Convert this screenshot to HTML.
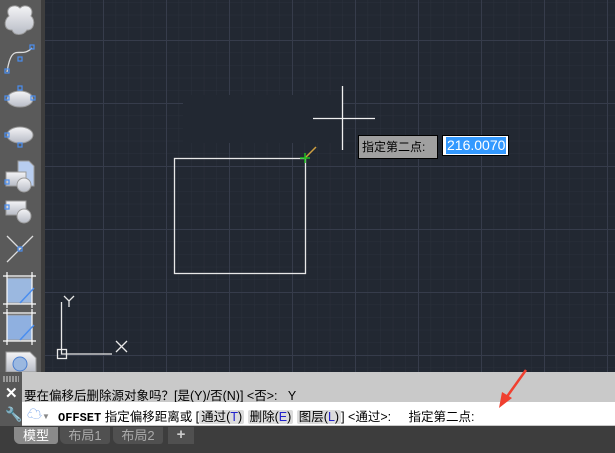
<!DOCTYPE html>
<html><head><meta charset="utf-8"><style>
body{margin:0;width:615px;height:453px;overflow:hidden;background:#3c3c3c;font-family:"Liberation Sans","Noto Sans CJK SC",sans-serif;position:relative}
.abs{position:absolute}
.k{background:#dcdcdc;padding:0 2px;border-radius:2px}
</style></head><body>
<svg class="abs" style="left:0;top:0" width="615" height="372">
<defs>
<pattern id="mn" x="103" y="40" width="12.6" height="12.6" patternUnits="userSpaceOnUse"><path d="M0 0V12.6M0 0H12.6" stroke="#2b313c" stroke-width="1" fill="none"/></pattern>
<pattern id="mj" x="103" y="40" width="63" height="63" patternUnits="userSpaceOnUse"><path d="M0.5 0V63M0 0.5H63" stroke="#363c4b" stroke-width="1" fill="none"/></pattern>
<linearGradient id="g" x1="0" y1="0" x2="0" y2="1"><stop offset="0" stop-color="#f4f4f6"/><stop offset="1" stop-color="#b8bcc6"/></linearGradient>
</defs>
<rect width="615" height="372" fill="#222832"/>
<rect x="45" width="570" height="372" fill="url(#mn)"/>
<rect x="45" width="570" height="372" fill="url(#mj)"/>
<rect x="183" y="95" width="160" height="48" fill="#222832"/>
<rect x="174.5" y="158.5" width="131" height="115" fill="none" stroke="#e8e8e8" stroke-width="1.3"/>
<path d="M305 158L316 147" stroke="#d0a040" stroke-width="1.5"/>
<path d="M300 158H310M305 153V163" stroke="#20c020" stroke-width="1.5"/>
<path d="M313 118.5H375M342.5 86V150" stroke="#f0f0f0" stroke-width="1.3"/>
<path d="M61.5 302V354H112M64 296L69 301L74 296M69 301V307M116 341L127 352M127 341L116 352" stroke="#e8e8e8" stroke-width="1.3" fill="none"/>
<rect x="57.5" y="349.5" width="9" height="9" fill="none" stroke="#e8e8e8" stroke-width="1.3"/>
<rect width="41" height="372" fill="#5a5a5a"/>
<rect x="41" width="4" height="372" fill="#3e3e3e"/>
<g fill="url(#g)" stroke="#999">
<path d="M9 16C4 7 15 3 20 8C25 3 35 7 31 16C36 20 34 31 27 30C23 36 14 36 12 30C4 31 3 20 9 16Z"/>
<ellipse cx="20" cy="99" rx="13" ry="8"/>
<ellipse cx="20" cy="135" rx="13" ry="8"/>
<path d="M18 161H29L34 166V186H18Z" fill="#b8cdef"/>
<rect x="6" y="172" width="20" height="14"/><circle cx="24" cy="185" r="7"/>
<rect x="6" y="201" width="20" height="14"/><circle cx="24" cy="216" r="7"/>
<rect x="7" y="278" width="25" height="25" fill="#9bb8e0"/>
<rect x="7" y="315" width="25" height="25" fill="#8fb0e0"/>
<path d="M6 352H30L36 358V372H6Z"/>
</g>
<g stroke="#fff" stroke-width="1.2"><path d="M3 276H36M3 304H36M7 272V308M32 272V308M3 313H36M3 341H36M7 309V345M32 309V345"/></g>
<path d="M20 303L34 288M20 340L34 325" stroke="#4a8ef0" stroke-width="1.5"/>
<path d="M7 72C12 40 20 60 32 48" stroke="#ddd" fill="none" stroke-width="1.3"/>
<path d="M7 262L33 236M7 236L20 249" stroke="#ddd" stroke-width="1.3"/>
<g fill="none" stroke="#4a8ef0" stroke-width="1.2">
<rect x="30" y="45" width="4" height="4"/><rect x="18" y="57" width="4" height="4"/><rect x="5" y="69" width="4" height="4"/>
<rect x="18" y="86" width="4" height="4"/><rect x="5" y="96" width="4" height="4"/><rect x="31" y="96" width="4" height="4"/>
<rect x="5" y="133" width="4" height="4"/><rect x="18" y="143" width="4" height="4"/>
<rect x="5" y="180" width="4" height="4"/><rect x="5" y="205" width="4" height="4"/><rect x="18" y="247" width="4" height="4"/>
</g>
<circle cx="20" cy="364" r="7" fill="#9bb8e0" stroke="#4a7ed0"/>
</svg>
<div class="abs" style="left:358px;top:135px;background:#a0a0a0;border:1px solid #000;font-size:12px;line-height:22px;padding-left:3px;box-sizing:border-box;width:80px;height:24px;color:#000">指定第二点:</div>
<div class="abs" style="left:442px;top:135px;width:67px;height:21px;background:#fff;border:1px solid #000;box-sizing:border-box"><span style="background:#3399ff;color:#fff;font-size:14px;line-height:17px;display:inline-block;margin:1px 0 0 3px;padding:0 1px">216.0070</span></div>
<div class="abs" style="left:0;top:372px;width:615px;height:54px;background:#c9c9c9"></div>
<div class="abs" style="left:0;top:372px;width:22px;height:54px;background:#585858"></div>
<div class="abs" style="left:3px;top:376px;width:16px;height:6px;background:repeating-linear-gradient(90deg,#999 0 2px,transparent 2px 3px)"></div>
<div class="abs" style="left:5px;top:384px;color:#fff;font-size:15px;font-weight:bold">✕</div>
<div class="abs" style="left:5px;top:406px;color:#fff;font-size:14px">🔧</div>
<div class="abs" style="left:24px;top:385px;font-size:12.5px;color:#000;white-space:pre">要在偏移后删除源对象吗？[是(Y)/否(N)] &lt;否&gt;:   Y</div>
<div class="abs" style="left:22px;top:402px;width:593px;height:23px;background:#fff"></div>
<div class="abs" style="left:27px;top:403px;color:#6b9be8;font-size:15px">☁<span style="font-size:8px;color:#888">▼</span></div>
<div class="abs" style="left:58px;top:406px;font-size:12.5px;color:#000;white-space:pre"><b style="font-family:'Liberation Mono',monospace;font-size:12px">OFFSET</b> 指定偏移距离或 [<span class="k">通过(<span style="color:#22c">T</span>)</span> <span class="k">删除(<span style="color:#22c">E</span>)</span> <span class="k">图层(<span style="color:#22c">L</span>)</span>] &lt;通过&gt;:     指定第二点:</div>
<svg class="abs" style="left:490px;top:368px" width="40" height="45"><path d="M36 2L16 30" stroke="#f04030" stroke-width="2.5"/><path d="M9 40L12 24L22 30Z" fill="#f04030"/></svg>
<div class="abs" style="left:0;top:426px;width:615px;height:27px;background:#3d3d3d"></div>
<div class="abs" style="left:14px;top:427px;width:44px;height:17px;background:#8a8a8a;color:#fff;font-size:13px;text-align:center;line-height:17px;border-radius:0 0 3px 6px">模型</div>
<div class="abs" style="left:60px;top:427px;width:50px;height:17px;background:#505050;color:#aaa;font-size:13px;text-align:center;line-height:17px;border-radius:0 0 3px 6px">布局1</div>
<div class="abs" style="left:113px;top:427px;width:50px;height:17px;background:#505050;color:#aaa;font-size:13px;text-align:center;line-height:17px;border-radius:0 0 3px 6px">布局2</div>
<div class="abs" style="left:168px;top:427px;width:26px;height:17px;background:#505050;color:#ccc;font-size:15px;text-align:center;line-height:16px;font-weight:bold">+</div>
</body></html>
